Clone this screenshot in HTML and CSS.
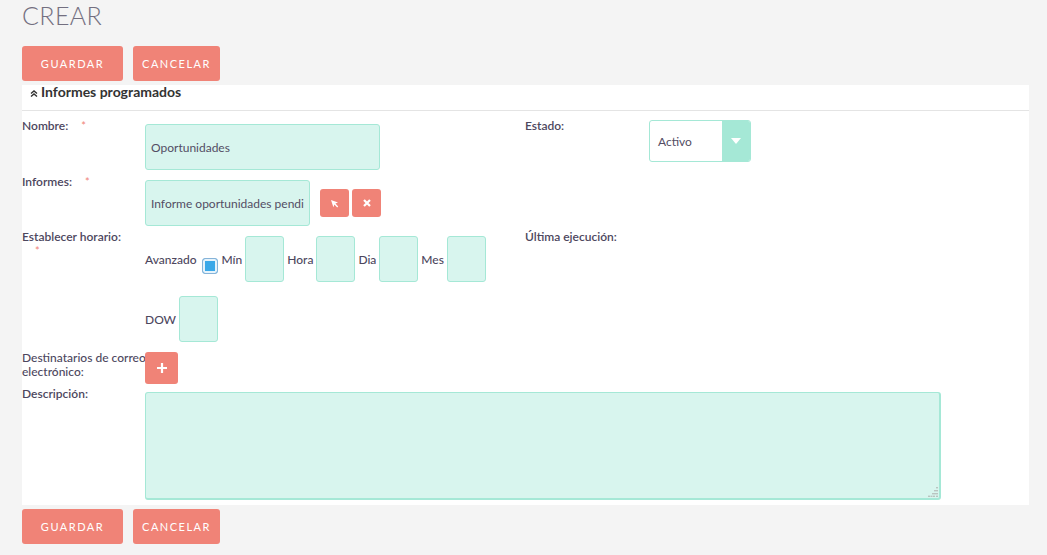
FILE: index.html
```html
<!DOCTYPE html>
<html>
<head>
  <meta charset="UTF-8">
  <meta name="viewport" content="width=device-width, initial-scale=1.0">
  <link rel="stylesheet" href="styles.css">
</head>
<body>
  <h2 class="module-title">CREAR</h2>
  <div class="action-buttons">
    <button class="btn">GUARDAR</button>
    <button class="btn">CANCELAR</button>
  </div>

  <div class="panel">
    <div class="panel-heading">
      <svg class="chevron" width="8" height="7" viewBox="0 0 8 7">
        <path d="M1 3.5 L4 1 L7 3.5 M1 6.5 L4 4 L7 6.5" fill="none" stroke="#333" stroke-width="1.4"/>
      </svg>Informes programados
    </div>
    <div class="panel-body">
      <div class="row row-nombre">
        <div class="col">
          <div class="label">Nombre:<span class="req">*</span></div>
          <div class="field"><input class="text-input name-input" type="text" value="Oportunidades"></div>
        </div>
        <div class="col">
          <div class="label">Estado:</div>
          <div class="field field-select">
            <div class="select">
              <span class="select-value">Activo</span>
              <span class="select-arrow"><svg width="10" height="6" viewBox="0 0 10 6"><path d="M0 0 H10 L5 6 Z" fill="#fff"/></svg></span>
            </div>
          </div>
        </div>
      </div>

      <div class="row row-informes">
        <div class="col">
          <div class="label">Informes:<span class="req">*</span></div>
          <div class="field field-relate">
            <input class="text-input report-input" type="text" value="Informe oportunidades pendientes">
            <button class="icon-btn first">
              <svg width="9" height="9" viewBox="0 0 9 9"><path d="M1 1 L8 3.6 L5.4 4.6 L8.2 7.4 L7.2 8.4 L4.4 5.6 L3.4 8.2 Z" fill="#fff"/></svg>
            </button>
            <button class="icon-btn">
              <svg width="8" height="8" viewBox="0 0 8 8"><path d="M1 1 L7 7 M7 1 L1 7" stroke="#fff" stroke-width="2.2"/></svg>
            </button>
          </div>
        </div>
        <div class="col"></div>
      </div>

      <div class="row row-horario">
        <div class="col">
          <div class="label"><span class="nowrap">Establecer horario:</span><wbr><span class="req">*</span></div>
          <div class="field schedule">
            <span class="sched-item">
              <span class="sched-label">Avanzado</span>
              <span class="checkbox"></span>
            </span>
            <span class="sched-item">
              <span class="sched-label">Mín</span>
              <input class="text-input small-input" type="text">
            </span>
            <span class="sched-item">
              <span class="sched-label">Hora</span>
              <input class="text-input small-input" type="text">
            </span>
            <span class="sched-item">
              <span class="sched-label">Dia</span>
              <input class="text-input small-input" type="text">
            </span>
            <span class="sched-item">
              <span class="sched-label">Mes</span>
              <input class="text-input small-input" type="text">
            </span>
            <span class="sched-item">
              <span class="sched-label">DOW</span>
              <input class="text-input small-input" type="text">
            </span>
          </div>
        </div>
        <div class="col">
          <div class="label">Última ejecución:</div>
          <div class="field"></div>
        </div>
      </div>

      <div class="row row-dest">
        <div class="label label-wide">Destinatarios de correo<br>electrónico:</div>
        <div class="field">
          <button class="icon-btn add-btn">
            <svg width="10" height="10" viewBox="0 0 10 10"><path d="M5 0 V10 M0 5 H10" stroke="#fff" stroke-width="2.2"/></svg>
          </button>
        </div>
      </div>

      <div class="row row-desc">
        <div class="label">Descripción:</div>
        <div class="field desc-wrap">
          <textarea class="desc"></textarea>
          <svg class="grip" width="10" height="10" viewBox="0 0 10 10">
            <g fill="#b9c4c0">
              <rect x="8" y="0" width="2" height="1.4"/>
              <rect x="6" y="3" width="2" height="1.4"/><rect x="8" y="3" width="2" height="1.4"/>
              <rect x="4" y="6" width="2" height="1.4"/><rect x="6" y="6" width="2" height="1.4"/><rect x="8" y="6" width="2" height="1.4"/>
              <rect x="0" y="8.6" width="2" height="1.4"/><rect x="2.5" y="8.6" width="2" height="1.4"/><rect x="5" y="8.6" width="2" height="1.4"/><rect x="8" y="8.6" width="2" height="1.4"/>
            </g>
          </svg>
        </div>
      </div>
    </div>
  </div>

  <div class="action-buttons bottom">
    <button class="btn">GUARDAR</button>
    <button class="btn">CANCELAR</button>
  </div>
</body>
</html>
```

FILE: styles.css
```css
body {
  margin: 0;
  padding: 0 18px 0 22px;
  background: #f4f4f4;
  font-family: Lato, "Open Sans", sans-serif;
  color: #534d64;
}
.module-title {
  margin: 0;
  font-size: 25px;
  line-height: 30px;
  font-weight: 300;
  letter-spacing: 0.4px;
  color: #736f80;
}
.action-buttons {
  display: flex;
  gap: 10px;
  margin-top: 16px;
}
.action-buttons.bottom {
  margin-top: 4px;
}
.btn {
  height: 35px;
  padding: 0 18px;
  background: #f08377;
  color: #fff;
  border: none;
  border-radius: 3px;
  font-family: Lato, sans-serif;
  font-size: 11px;
  letter-spacing: 1.5px;
}
.action-buttons .btn:first-child {
  width: 101px;
}
.action-buttons .btn:last-child {
  width: 87px;
  padding: 0;
}
.panel {
  margin-top: 4px;
  background: #fff;
}
.panel-heading {
  font-size: 14px;
  line-height: 14px;
  font-weight: bold;
  color: #333;
  padding: 0 0 11px 8px;
  border-bottom: 1px solid #e4e4e4;
}
.chevron {
  margin-right: 3px;
}
.panel-body {
  padding: 8px 0 5px;
}
.row {
  display: flex;
}
.col {
  display: flex;
  width: 503px;
}
.col + .col {
  width: 504px;
}
.label {
  box-sizing: border-box;
  width: 123px;
  padding-right: 8px;
  flex-shrink: 0;
  font-size: 12px;
  line-height: 14px;
  font-weight: 600;
  color: #4d475e;
}
.nowrap {
  white-space: nowrap;
}
.label-wide {
  white-space: nowrap;
  font-weight: 500;
}
.col + .col .label {
  width: 124px;
}
.req {
  color: #f08377;
  font-weight: normal;
  margin-left: 13px;
  font-size: 11px;
}
.field {
  margin-top: 5px;
}
.row-informes {
  margin-top: 5px;
}
.row-horario {
  margin-top: 4px;
}
.row-horario .field {
  margin-top: 6px;
}
.row-dest {
  margin-top: 9px;
}
.row-dest .field {
  margin-top: 1px;
}
.row-desc {
  margin-top: 3px;
}
.text-input {
  box-sizing: border-box;
  height: 46px;
  background: #d8f5ee;
  border: 1px solid #a5e8d6;
  border-radius: 3px;
  padding: 0 5px;
  font-family: Lato, sans-serif;
  font-size: 12px;
  color: #534d64;
  outline: none;
}
.name-input {
  width: 235px;
}
.report-input {
  width: 165px;
}
.field-relate {
  display: flex;
  align-items: center;
}
.icon-btn {
  width: 29px;
  height: 28px;
  padding: 0;
  border: none;
  border-radius: 3px;
  background: #f08377;
  display: flex;
  align-items: center;
  justify-content: center;
  margin-left: 3px;
}
.icon-btn.first {
  margin-left: 10px;
}
.add-btn {
  width: 33px;
  height: 32px;
  margin-left: 0;
}
.field-select {
  margin-top: 1px;
}
.select {
  box-sizing: border-box;
  width: 102px;
  height: 42px;
  display: flex;
  border: 1px solid #a5e8d6;
  border-radius: 3px;
  overflow: hidden;
  font-size: 12px;
}
.select-value {
  flex: 1;
  display: flex;
  align-items: center;
  padding-left: 8px;
}
.select-arrow {
  width: 28px;
  background: #a5e8d6;
  display: flex;
  align-items: center;
  justify-content: center;
}
.schedule {
  display: flex;
  flex-wrap: wrap;
  align-items: center;
  column-gap: 3px;
  row-gap: 14px;
  width: 380px;
}
.sched-item {
  display: flex;
  align-items: center;
  gap: 3px;
}
.sched-label {
  font-size: 12px;
  font-weight: 500;
  color: #4d475e;
}
.small-input {
  width: 39px;
}
.checkbox {
  box-sizing: border-box;
  width: 16px;
  height: 16px;
  margin: 14px 1px 0 2px;
  border: 1px solid #86b3d8;
  border-radius: 3px;
  background: #3aa8e8;
  box-shadow: inset 0 0 0 2px #e6f3fb;
}
.desc-wrap {
  position: relative;
}
.desc {
  box-sizing: border-box;
  display: block;
  width: 796px;
  height: 108px;
  background: #d8f5ee;
  border: 1px solid #a5e8d6;
  border-right-width: 2px;
  border-bottom-width: 2px;
  border-radius: 3px;
  outline: none;
  resize: none;
}
.grip {
  position: absolute;
  right: 3px;
  bottom: 3px;
}
```
